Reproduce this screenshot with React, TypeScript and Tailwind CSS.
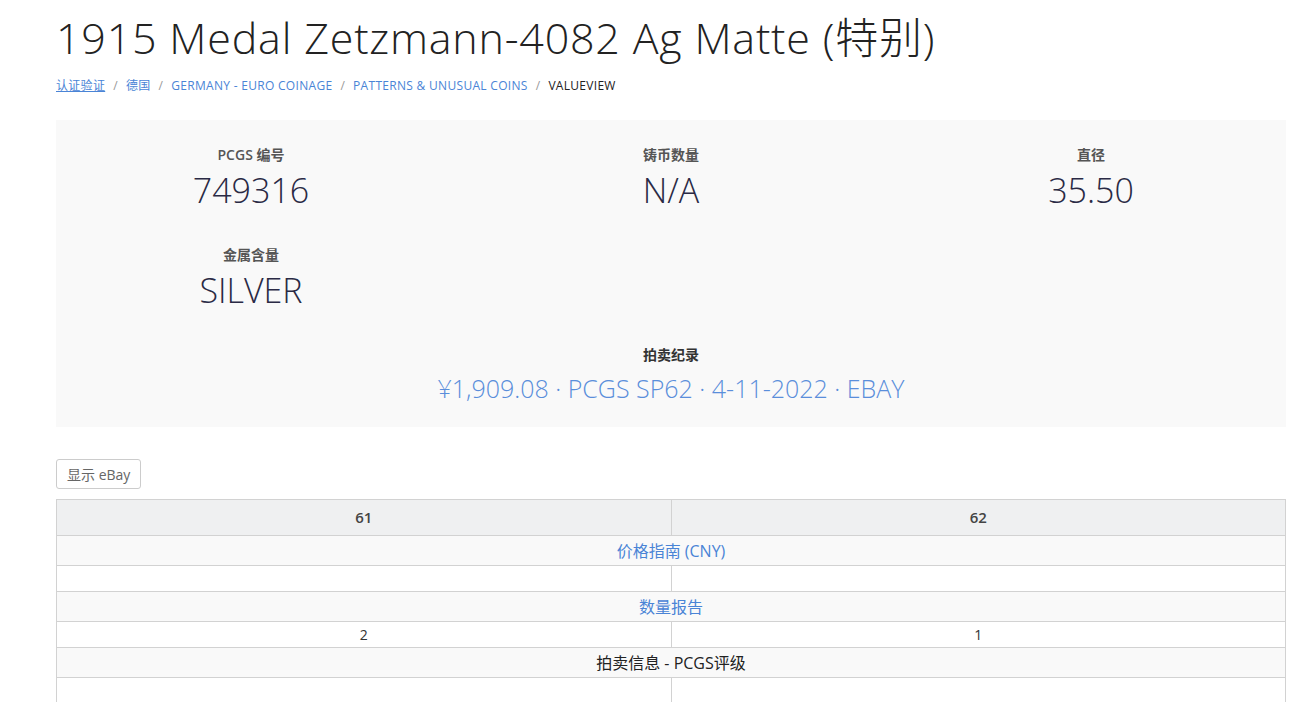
const sans = "font-['Open_Sans','Noto_Sans_CJK_SC',sans-serif]";

const stats = [
  { label: 'PCGS 编号', value: '749316' },
  { label: '铸币数量', value: 'N/A' },
  { label: '直径', value: '35.50' },
  { label: '金属含量', value: 'SILVER' },
];

const crumbs = ['认证验证', '德国', 'GERMANY - EURO COINAGE', 'PATTERNS & UNUSUAL COINS'];

function Stat({ label, value }: { label: string; value: string }) {
  return (
    <div className="flex flex-col items-center pb-[33px]">
      <div className="text-[14px] leading-[20px] font-semibold text-[#555]">{label}</div>
      <div className="mt-[3px] text-[34px] leading-[44px] font-light text-[#2a2a45]">{value}</div>
    </div>
  );
}

export default function App() {
  return (
    <div className={`${sans} bg-white min-h-[702px] pl-[56px] pr-[9px] pt-[12px] text-[#333]`}>
      <h1 className="text-[43px] leading-[52px] font-light text-[#222] tracking-[0.8px]">
        1915 Medal Zetzmann-4082 Ag Matte (特别)
      </h1>

      <nav className="mt-[13px] flex items-center text-[12px] leading-[18px] tracking-[0.3px]">
        {crumbs.map((c, i) => (
          <span key={c} className="flex items-center">
            <a className={`text-[#4a84d6] ${i === 0 ? 'underline' : ''}`}>{c}</a>
            <span className="mx-[8px] text-[#999]">/</span>
          </span>
        ))}
        <span className="text-[#222]">VALUEVIEW</span>
      </nav>

      <section className="mt-[25px] bg-[#f9f9f9] pt-[25px] pb-[18px]">
        <div className="mx-[-15px] grid grid-cols-3">
          {stats.map((s) => (
            <Stat key={s.label} label={s.label} value={s.value} />
          ))}
        </div>
        <div className="flex flex-col items-center">
          <div className="text-[14px] leading-[20px] font-semibold text-[#333]">拍卖纪录</div>
          <div className="mt-[2px] text-[25px] leading-[42px] font-light text-[#5a8edb]">
            ¥1,909.08 · PCGS SP62 · 4-11-2022 · EBAY
          </div>
        </div>
      </section>

      <button className="mt-[32px] h-[30px] px-[10px] border border-[#ccc] rounded-[3px] bg-white text-[14px] text-[#666]">
        显示 eBay
      </button>

      <table className="mt-[10px] w-full border-collapse text-[14px]">
        <thead>
          <tr className="bg-[#eff0f1] h-[36px]">
            <th className="w-1/2 border border-[#d2d2d2] text-[15px] font-semibold text-[#444]">61</th>
            <th className="w-1/2 border border-[#d2d2d2] text-[15px] font-semibold text-[#444]">62</th>
          </tr>
        </thead>
        <tbody>
          <tr className="bg-[#f9f9f9] h-[30px]">
            <td colSpan={2} className="border border-[#d2d2d2] text-center text-[16px] text-[#4a84d6]">价格指南 (CNY)</td>
          </tr>
          <tr className="h-[26px]">
            <td className="border border-[#d2d2d2]"></td>
            <td className="border border-[#d2d2d2]"></td>
          </tr>
          <tr className="bg-[#f9f9f9] h-[30px]">
            <td colSpan={2} className="border border-[#d2d2d2] text-center text-[16px] text-[#4a84d6]">数量报告</td>
          </tr>
          <tr className="h-[26px]">
            <td className="border border-[#d2d2d2] text-center text-[#333]">2</td>
            <td className="border border-[#d2d2d2] text-center text-[#333]">1</td>
          </tr>
          <tr className="bg-[#f9f9f9] h-[30px]">
            <td colSpan={2} className="border border-[#d2d2d2] text-center text-[16px] text-[#222]">拍卖信息 - PCGS评级</td>
          </tr>
          <tr className="h-[30px]">
            <td className="border border-[#d2d2d2]"></td>
            <td className="border border-[#d2d2d2]"></td>
          </tr>
        </tbody>
      </table>
    </div>
  );
}
